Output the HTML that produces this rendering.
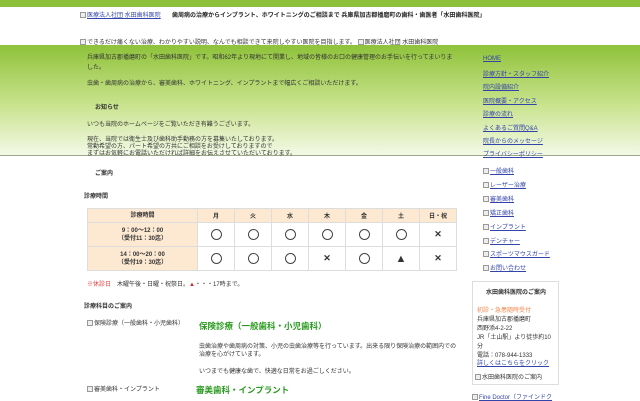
<!DOCTYPE html>
<html><head><meta charset="utf-8"><style>
*{margin:0;padding:0;box-sizing:border-box}
body{width:640px;height:400px;overflow:hidden;background:#fff;font-family:"Liberation Sans","Noto Sans CJK JP",sans-serif;font-size:6px;color:#333;position:relative}
.a{position:absolute;white-space:nowrap}
.topbar{position:absolute;left:0;top:0;width:640px;height:7px;background:#8cbf3a}
.band{position:absolute;left:0;top:45px;width:640px;height:110px;background:linear-gradient(#8fc23a,#c9e38e 55%,#f3f9e6)}
.line{position:absolute;left:0;top:155px;width:640px;height:1px;background:#9aa88a}
a,.lk{color:#3344aa;text-decoration:underline}
.img{display:inline-block;width:6px;height:6px;border:1px solid #999;vertical-align:middle;margin-right:1px;background:#eee}
table{position:absolute;left:87px;top:208px;border-collapse:collapse}
td{border:1px solid #ddd;text-align:center;font-size:6px;font-weight:bold;height:24px;width:37px}
tr.h td{height:14px;background:#fde9d2}
td.f{width:110px;background:#fde9d2;line-height:8px}
.c{font-weight:normal}
.c span{display:inline-block;width:11px;height:11px;border:1px solid #444;border-radius:50%;vertical-align:middle}
.x{font-size:9px}
.side div{position:absolute;left:483px}
.g{color:#2a9a1f;font-weight:bold;font-size:8.5px}
</style></head><body>
<div class="topbar"></div>
<div class="a" style="left:80px;top:10px"><span class="img"></span><span class="lk">医療法人社団 水田歯科医院</span></div>
<div class="a" style="left:172px;top:10px;font-weight:bold;font-size:6px;color:#222">歯周病の治療からインプラント、ホワイトニングのご相談まで 兵庫県加古郡播磨町の歯科・歯医者「水田歯科医院」</div>
<div class="a" style="left:80px;top:37px"><span class="img"></span>できるだけ痛くない治療、わかりやすい説明、なんでも相談できて来院しやすい医院を目指します。 <span class="img"></span>医療法人社団 水田歯科医院</div>
<div class="band"></div>
<div class="line"></div>
<div class="a" style="left:87px;top:52px">兵庫県加古郡播磨町の「水田歯科医院」です。昭和62年より現地にて開業し、地域の皆様のお口の健康管理のお手伝いを行ってまいりま</div>
<div class="a" style="left:87px;top:62px">した。</div>
<div class="a" style="left:87px;top:78px">虫歯・歯周病の治療から、審美歯科、ホワイトニング、インプラントまで幅広くご相談いただけます。</div>
<div class="a" style="left:95px;top:102px;font-weight:bold">お知らせ</div>
<div class="a" style="left:87px;top:119px">いつも当院のホームページをご覧いただき有難うございます。</div>
<div class="a" style="left:87px;top:134px">現在、当院では衛生士及び歯科助手勤務の方を募集いたしております。</div>
<div class="a" style="left:87px;top:141px">常勤希望の方、パート希望の方共にご相談をお受けしておりますので</div>
<div class="a" style="left:87px;top:148px">まずはお気軽にお電話いただければ詳細をお伝えさせていただいております。</div>
<div class="side">
<div class="lk a" style="top:56px">HOME</div>
<div class="lk a" style="top:69px">診療方針・スタッフ紹介</div>
<div class="lk a" style="top:82px">院内設備紹介</div>
<div class="lk a" style="top:96px">医院概要・アクセス</div>
<div class="lk a" style="top:109px">診療の流れ</div>
<div class="lk a" style="top:123px">よくあるご質問Q&amp;A</div>
<div class="lk a" style="top:136px">院長からのメッセージ</div>
<div class="lk a" style="top:149px">プライバシーポリシー</div>
</div>
<div class="a" style="left:95px;top:168px;font-weight:bold">ご案内</div>
<div class="a" style="left:84px;top:191px;font-weight:bold">診療時間</div>
<table>
<tr class="h"><td class="f">診療時間</td><td>月</td><td>火</td><td>水</td><td>木</td><td>金</td><td>土</td><td>日・祝</td></tr>
<tr><td class="f">9：00〜12：00<br>（受付11：30迄）</td><td class="c"><span></span></td><td class="c"><span></span></td><td class="c"><span></span></td><td class="c"><span></span></td><td class="c"><span></span></td><td class="c"><span></span></td><td class="x">✕</td></tr>
<tr><td class="f">14：00〜20：00<br>（受付19：30迄）</td><td class="c"><span></span></td><td class="c"><span></span></td><td class="c"><span></span></td><td class="x">✕</td><td class="c"><span></span></td><td class="x" style="font-size:11px">▲</td><td class="x">✕</td></tr>
</table>
<div class="a" style="left:87px;top:279px"><span style="color:#e04040">※休診日</span>　木曜午後・日曜・祝祭日。<span style="color:#d22">▲</span>・・・17時まで。</div>
<div class="a" style="left:84px;top:301px;font-weight:bold">診療科目のご案内</div>
<div class="a" style="left:87px;top:318px"><span class="img"></span>保険診療（一般歯科・小児歯科）</div>
<div class="a g" style="left:199px;top:320px">保険診療（一般歯科・小児歯科）</div>
<div class="a" style="left:199px;top:341px">虫歯治療や歯周病の対策、小児の虫歯治療等を行っています。出来る限り保険治療の範囲内での</div>
<div class="a" style="left:199px;top:349px">治療を心がけています。</div>
<div class="a" style="left:199px;top:366px">いつまでも健康な歯で、快適な日常をお過ごしください。</div>
<div class="a" style="left:87px;top:384px"><span class="img"></span>審美歯科・インプラント</div>
<div class="a g" style="left:196px;top:384px">審美歯科・インプラント</div>
<div class="side">
<div class="a" style="top:166px"><span class="img"></span><span class="lk">一般歯科</span></div>
<div class="a" style="top:180px"><span class="img"></span><span class="lk">レーザー治療</span></div>
<div class="a" style="top:194px"><span class="img"></span><span class="lk">審美歯科</span></div>
<div class="a" style="top:208px"><span class="img"></span><span class="lk">矯正歯科</span></div>
<div class="a" style="top:222px"><span class="img"></span><span class="lk">インプラント</span></div>
<div class="a" style="top:236px"><span class="img"></span><span class="lk">デンチャー</span></div>
<div class="a" style="top:249px"><span class="img"></span><span class="lk">スポーツマウスガード</span></div>
<div class="a" style="top:263px"><span class="img"></span><span class="lk">お問い合わせ</span></div>
</div>
<div style="position:absolute;left:472px;top:281px;width:87px;height:104px;border:1px solid #ddd"></div>
<div class="a" style="left:486px;top:287px;font-weight:bold">水田歯科医院のご案内</div>
<div class="a" style="left:477px;top:305px;color:#f08a50">初診・急患随時受付</div>
<div class="a" style="left:477px;top:314px">兵庫県加古郡播磨町</div>
<div class="a" style="left:477px;top:323px">西野添4-2-22</div>
<div class="a" style="left:477px;top:332px">JR「土山駅」より徒歩約10</div>
<div class="a" style="left:477px;top:341px">分</div>
<div class="a" style="left:477px;top:350px">電話：078-944-1333</div>
<div class="a lk" style="left:477px;top:358px">詳しくはこちらをクリック</div>
<div class="a" style="left:475px;top:372px"><span class="img"></span>水田歯科医院のご案内</div>
<div class="a" style="left:472px;top:392px"><span class="img"></span><span class="lk">Fine Doctor（ファインドク</span></div>
</body></html>
